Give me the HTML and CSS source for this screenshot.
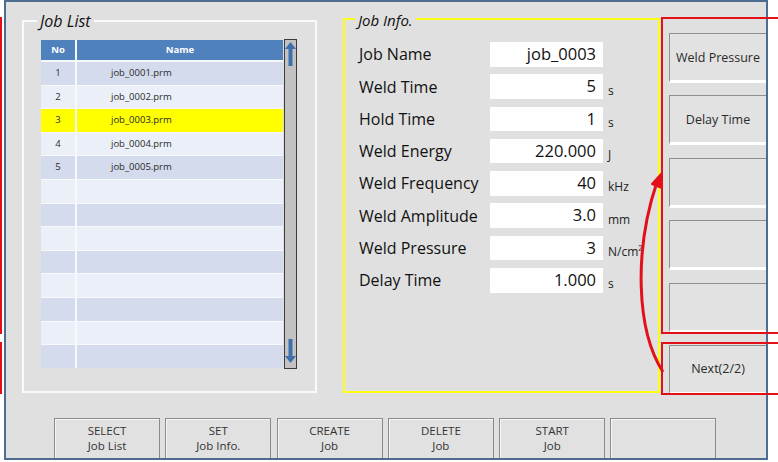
FILE: index.html
```html
<!DOCTYPE html>
<html>
<head>
<meta charset="utf-8">
<link rel="stylesheet" href="styles.css">
</head>
<body>
<div class="screen">
  <div class="panel">
    <div class="main">
      <section class="group joblist">
        <h2 class="legend">Job List</h2>
        <div class="listwrap">
          <div class="tbl">
            <div class="tr th"><div class="c1">No</div><div class="c2 center">Name</div></div>
            <div class="tr dark"><div class="c1">1</div><div class="c2">job_0001.prm</div></div>
            <div class="tr light"><div class="c1">2</div><div class="c2">job_0002.prm</div></div>
            <div class="tr sel"><div class="c1">3</div><div class="c2">job_0003.prm</div></div>
            <div class="tr light"><div class="c1">4</div><div class="c2">job_0004.prm</div></div>
            <div class="tr dark"><div class="c1">5</div><div class="c2">job_0005.prm</div></div>
            <div class="tr light"><div class="c1"></div><div class="c2"></div></div>
            <div class="tr dark"><div class="c1"></div><div class="c2"></div></div>
            <div class="tr light"><div class="c1"></div><div class="c2"></div></div>
            <div class="tr dark"><div class="c1"></div><div class="c2"></div></div>
            <div class="tr light"><div class="c1"></div><div class="c2"></div></div>
            <div class="tr dark"><div class="c1"></div><div class="c2"></div></div>
            <div class="tr light"><div class="c1"></div><div class="c2"></div></div>
            <div class="tr dark"><div class="c1"></div><div class="c2"></div></div>
          </div>
          <div class="scroll">
            <svg class="arr" width="11" height="24" viewBox="0 0 11 24"><path d="M5.5 0 L11 7 L7.5 7 L7.5 24 L3.5 24 L3.5 7 L0 7 Z" fill="#3e6fae"/></svg>
            <svg class="arr" width="11" height="24" viewBox="0 0 11 24"><path d="M5.5 24 L11 17 L7.5 17 L7.5 0 L3.5 0 L3.5 17 L0 17 Z" fill="#3e6fae"/></svg>
          </div>
        </div>
      </section>

      <section class="group jobinfo">
        <h2 class="legend">Job Info.</h2>
        <div class="frow"><span class="lbl">Job Name</span><span class="val">job_0003</span></div>
        <div class="frow"><span class="lbl">Weld Time</span><span class="val">5</span><span class="unit">s</span></div>
        <div class="frow"><span class="lbl">Hold Time</span><span class="val">1</span><span class="unit">s</span></div>
        <div class="frow"><span class="lbl">Weld Energy</span><span class="val">220.000</span><span class="unit">J</span></div>
        <div class="frow"><span class="lbl">Weld Frequency</span><span class="val">40</span><span class="unit">kHz</span></div>
        <div class="frow"><span class="lbl">Weld Amplitude</span><span class="val">3.0</span><span class="unit">mm</span></div>
        <div class="frow"><span class="lbl">Weld Pressure</span><span class="val">3</span><span class="unit">N/cm²</span></div>
        <div class="frow"><span class="lbl">Delay Time</span><span class="val">1.000</span><span class="unit">s</span></div>
      </section>

      <div class="sidebtns">
        <div class="sbtn">Weld Pressure</div>
        <div class="sbtn">Delay Time</div>
        <div class="sbtn"></div>
        <div class="sbtn"></div>
        <div class="sbtn"></div>
        <div class="sbtn">Next(2/2)</div>
      </div>
    </div>

    <div class="bottom">
      <div class="bbtn"><span class="bl">SELECT</span><span class="bl">Job List</span></div>
      <div class="bbtn"><span class="bl">SET</span><span class="bl">Job Info.</span></div>
      <div class="bbtn"><span class="bl">CREATE</span><span class="bl">Job</span></div>
      <div class="bbtn"><span class="bl">DELETE</span><span class="bl">Job</span></div>
      <div class="bbtn"><span class="bl">START</span><span class="bl">Job</span></div>
      <div class="bbtn"></div>
    </div>
  </div>

  <div class="mark mark-l1"></div>
  <div class="mark mark-l2"></div>
  <div class="mark mark-r1"></div>
  <div class="mark mark-r2"></div>
  <svg class="curve" width="778" height="462" viewBox="0 0 778 462">
    <path d="M663 372 C 636 330, 634 250, 657 182" fill="none" stroke="#e3101a" stroke-width="3"/>
    <path d="M652 184 L662 173 L662 188 Z" fill="#e3101a" stroke="#e3101a" stroke-width="2" stroke-linejoin="round"/>
  </svg>
</div>
</body>
</html>
```

FILE: styles.css
```css
* { box-sizing: border-box; }
html, body { margin: 0; padding: 0; background: #fff; }
body { font-family: "Open Sans", "Noto Sans", sans-serif; color: #1a1a1a; }

.screen { position: relative; width: 778px; height: 462px; overflow: hidden; background: #fff; }

.panel {
  margin-left: 4px;
  width: 764px;
  height: 460px;
  border: 2px solid #4c6d90;
  background: #e0e0e0;
  display: flex;
  flex-direction: column;
}

.main { display: flex; align-items: flex-start; }

.group { position: relative; }
.legend {
  position: absolute;
  margin: 0;
  padding: 0 3px;
  font-weight: normal;
  font-style: italic;
  line-height: 20px;
  background: #e0e0e0;
  color: #111;
}

.joblist {
  margin: 18px 0 0 16px;
  width: 295px;
  height: 373px;
  border: 2px solid #fafafa;
  padding: 18px 0 0 17px;
}
.joblist .legend { left: 13px; top: -11px; font-size: 16px; }

.listwrap { display: flex; align-items: flex-start; }

.tbl {
  width: 242px;
  display: flex;
  flex-direction: column;
  gap: 1px;
  background: #f6f8fc;
}
.tr {
  display: grid;
  grid-template-columns: 34px 1fr;
  column-gap: 2px;
  height: 22.6px;
  font-size: 9.5px;
  line-height: 22.6px;
  background: #f6f8fc;
  color: #2a2a2a;
}
.tr .c1 { text-align: center; }
.tr .c2 { padding-left: 34px; }
.tr .c2.center { padding-left: 0; text-align: center; }
.th { height: 20px; line-height: 20px; margin-bottom: 1px; }
.th .c1, .th .c2 { background: #4f81bd; color: #fff; font-weight: bold; }
.dark .c1, .dark .c2 { background: #d3dbed; }
.light .c1, .light .c2 { background: #ebf0f8; }
.sel .c1, .sel .c2 { background: #ffff00; }

.scroll {
  width: 13px;
  height: 330px;
  margin-top: -1px;
  margin-left: 1px;
  background: #c2c2c2;
  border: 1px solid #3c3c3c;
  display: flex;
  flex-direction: column;
  justify-content: space-between;
  align-items: center;
  padding: 2px 0 5px;
}
.arr { display: block; }

.jobinfo {
  margin: 16px 0 0 26px;
  width: 317px;
  height: 375px;
  border: 2px solid #ffff14;
  padding: 22px 0 0 14px;
  display: flex;
  flex-direction: column;
  gap: 7.8px;
}
.jobinfo .legend { left: 10px; top: -10px; font-size: 15px; }

.frow { display: flex; align-items: center; height: 24.5px; white-space: nowrap; }
.lbl { width: 131px; font-size: 16px; color: #111; }
.val {
  width: 113px;
  height: 24.5px;
  background: #fff;
  text-align: right;
  padding-right: 7px;
  font-size: 16.5px;
  line-height: 24.5px;
  color: #111;
}
.unit { margin-left: 5px; padding-top: 7px; font-size: 12px; color: #222; }

.sidebtns {
  margin: 31px 0 0 9px;
  width: 97px;
  display: flex;
  flex-direction: column;
  gap: 12.4px;
}
.sbtn {
  height: 50px;
  background: #e2e2e2;
  border-top: 1px solid #8f8f8f;
  border-left: 1px solid #8f8f8f;
  border-bottom: 3px solid #fff;
  display: flex;
  align-items: center;
  justify-content: center;
  font-size: 12.5px;
  color: #2a2a2a;
}

.bottom {
  margin-top: auto;
  display: flex;
  gap: 5.3px;
  padding-left: 48px;
}
.bbtn {
  width: 106px;
  height: 40px;
  background: #e1e1e1;
  border: 1px solid #8a8a8a;
  border-bottom: none;
  box-shadow: inset 1px 1px 0 #f6f6f6;
  display: flex;
  flex-direction: column;
  align-items: center;
  padding-top: 4px;
  font-size: 11.5px;
  color: #333;
}
.bl { display: block; line-height: 16px; height: 15px; }

.mark { position: absolute; border: 2px solid #e3101a; }
.mark-l1 { left: -100px; width: 102px; top: 17px; height: 317px; }
.mark-l2 { left: -100px; width: 102px; top: 342px; height: 52px; }
.mark-r1 { left: 661px; width: 200px; top: 17px; height: 317px; }
.mark-r2 { left: 661px; width: 200px; top: 342px; height: 53px; }

.curve { position: absolute; left: 0; top: 0; pointer-events: none; }
```
